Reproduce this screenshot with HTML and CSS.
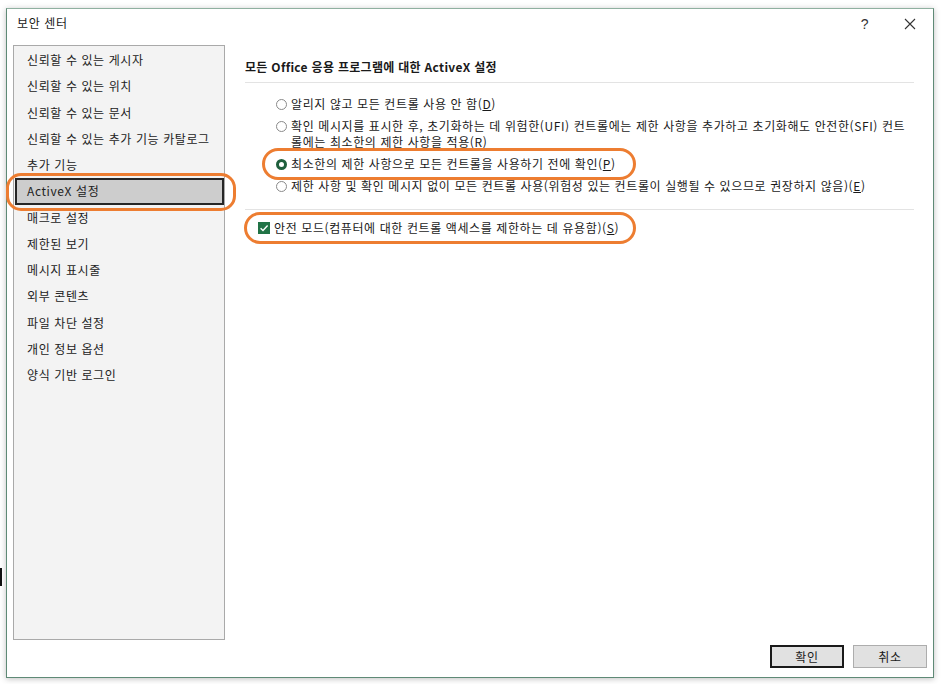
FILE: index.html
```html
<!DOCTYPE html>
<html lang="ko">
<head>
    <meta charset="UTF-8">
    <meta name="viewport" content="width=device-width, initial-scale=1.0">
    <title>보안 센터</title>
    <link rel="stylesheet" href="styles.css">
</head>
<body>
    <div class="cursor-mark"></div>

    <div class="dialog">
        <div class="titlebar">
            <span class="title">보안 센터</span>
            <span class="help">?</span>
            <span class="close">
                <svg width="12" height="12" viewBox="0 0 12 12"><path d="M1 1 L11 11 M11 1 L1 11" stroke="#333" stroke-width="1.1" fill="none"/></svg>
            </span>
        </div>

        <div class="content">
            <div class="sidebar">
                <div class="nav-item">신뢰할 수 있는 게시자</div>
                <div class="nav-item">신뢰할 수 있는 위치</div>
                <div class="nav-item">신뢰할 수 있는 문서</div>
                <div class="nav-item">신뢰할 수 있는 추가 기능 카탈로그</div>
                <div class="nav-item">추가 기능</div>
                <div class="nav-item active">ActiveX 설정<span class="mark mark-nav"></span></div>
                <div class="nav-item">매크로 설정</div>
                <div class="nav-item">제한된 보기</div>
                <div class="nav-item">메시지 표시줄</div>
                <div class="nav-item">외부 콘텐츠</div>
                <div class="nav-item">파일 차단 설정</div>
                <div class="nav-item">개인 정보 옵션</div>
                <div class="nav-item">양식 기반 로그인</div>
            </div>

            <div class="main">
                <div class="section-title">모든 Office 응용 프로그램에 대한 ActiveX 설정</div>

                <div class="options">
                    <div class="option">
                        <span class="radio"></span>
                        <span>알리지 않고 모든 컨트롤 사용 안 함(<u>D</u>)</span>
                    </div>
                    <div class="option">
                        <span class="radio"></span>
                        <span>확인 메시지를 표시한 후, 초기화하는 데 위험한(UFI) 컨트롤에는 제한 사항을 추가하고 초기화해도 안전한(SFI) 컨트<br>롤에는 최소한의 제한 사항을 적용(<u>R</u>)</span>
                    </div>
                    <div class="option">
                        <span class="radio checked"></span>
                        <span>최소한의 제한 사항으로 모든 컨트롤을 사용하기 전에 확인(<u>P</u>)</span>
                        <span class="mark mark-radio"></span>
                    </div>
                    <div class="option">
                        <span class="radio"></span>
                        <span>제한 사항 및 확인 메시지 없이 모든 컨트롤 사용(위험성 있는 컨트롤이 실행될 수 있으므로 권장하지 않음)(<u>E</u>)</span>
                    </div>
                </div>

                <div class="safe-mode">
                    <span class="checkbox">
                        <svg width="12" height="12" viewBox="0 0 12 12"><path d="M2.6 6.2 L5 8.5 L9.6 3.6" stroke="#fff" stroke-width="1.4" fill="none"/></svg>
                    </span>
                    <span>안전 모드(컴퓨터에 대한 컨트롤 액세스를 제한하는 데 유용함)(<u>S</u>)</span>
                    <span class="mark mark-check"></span>
                </div>
            </div>
        </div>

        <div class="footer">
            <button class="btn default">확인</button>
            <button class="btn">취소</button>
        </div>
    </div>
</body>
</html>
```

FILE: styles.css
```css
body {
  margin:0;
  width:942px;
  height:684px;
  overflow:hidden;
  background:#fff;
  font-family:"Noto Sans CJK KR", "Noto Sans", sans-serif;
  font-size:12px;
  letter-spacing:0.6px;
  color:#1a1a1a;
  position:relative;
}
.cursor-mark {
  position:absolute;
  left:0;
  top:568px;
  width:2px;
  height:18px;
  background:#111;
}
.dialog {
  margin:8px 0 0 6px;
  width:928px;
  height:670px;
  box-sizing:border-box;
  border:1px solid #5f8a76;
  border-top-color:#8fb0a0;
  box-shadow:0 1px 6px rgba(0,0,0,0.25);
  display:flex;
  flex-direction:column;
  background:#fff;
}
.titlebar {
  height:36px;
  display:flex;
  align-items:center;
  padding-left:10px;
}
.titlebar .title {
  flex:1;
  line-height:16px;
  margin-top:-8px;
}
.titlebar .help {
  width:30px;
  text-align:center;
  font-family:"Liberation Sans", sans-serif;
  font-size:14px;
  color:#333;
  margin-top:-7px;
}
.titlebar .close {
  width:46px;
  margin-left:7px;
  display:flex;
  justify-content:center;
  margin-top:-7px;
}
.content {
  display:flex;
  gap:20px;
  padding:0 19px 0 6px;
  height:595px;
}
.sidebar {
  width:212px;
  box-sizing:border-box;
  border:1px solid #a9a9a9;
  background:#f3f3f3;
  padding-top:1px;
}
.nav-item {
  height:26.25px;
  line-height:26px;
  box-sizing:border-box;
  padding-left:13px;
  color:#222;
  position:relative;
}
.nav-item.active {
  margin-left:1px;
  padding-left:10px;
  line-height:22px;
  background:#cdcdcd;
  border:2px solid #262626;
}
.mark {
  position:absolute;
  border:3px solid #ed7d31;
  border-radius:15px;
  box-sizing:border-box;
  pointer-events:none;
}
.mark-nav {
  left:-11px;
  right:-14px;
  top:-7px;
  bottom:-8px;
}
.main {
  flex:1;
}
.section-title {
  font-weight:700;
  letter-spacing:0.3px;
  line-height:16px;
  padding-top:14px;
  padding-bottom:7px;
  border-bottom:1px solid #e3e3e3;
}
.options {
  display:flex;
  flex-direction:column;
  gap:6px;
  padding-top:13px;
  padding-bottom:15px;
  border-bottom:1px solid #e3e3e3;
}
.option {
  display:flex;
  align-items:flex-start;
  padding-left:31px;
  line-height:16px;
  position:relative;
  white-space:nowrap;
}
.radio {
  width:11px;
  height:11px;
  box-sizing:border-box;
  border:1px solid #8a8a8a;
  border-radius:50%;
  background:#fff;
  margin:3px 4px 0 0;
  flex:none;
}
.radio.checked {
  border:3px solid #1f5f3c;
}
.mark-radio {
  left:17px;
  top:-8px;
  width:374px;
  height:32px;
  border-radius:16px;
}
.safe-mode {
  position:relative;
  display:flex;
  align-items:center;
  margin-top:10px;
  padding-left:13px;
  line-height:16px;
}
.checkbox {
  width:12px;
  height:12px;
  background:#217346;
  display:flex;
  margin-right:4px;
}
.mark-check {
  left:-1px;
  top:-8px;
  width:392px;
  height:32px;
  border-radius:16px;
}
.footer {
  display:flex;
  justify-content:flex-end;
  gap:9px;
  padding:5px 6px 0 0;
}
.btn {
  width:74px;
  height:23px;
  box-sizing:border-box;
  background:#e1e1e1;
  border:1px solid #adadad;
  font-family:"Noto Sans CJK KR", sans-serif;
  font-size:12px;
  letter-spacing:0.6px;
  color:#1a1a1a;
  padding:0;
}
.btn.default {
  border:2px solid #1a1a1a;
}
```
